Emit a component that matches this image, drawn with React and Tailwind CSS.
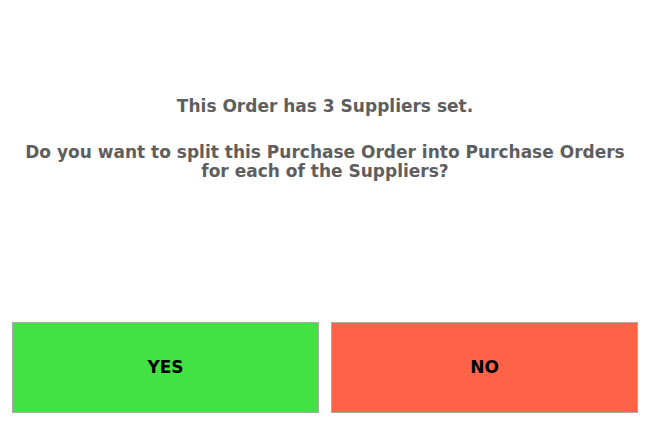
import React from 'react';

const App = () => {
  return (
    <div className="h-[425px] w-[650px] bg-white flex flex-col font-['DejaVu_Sans',sans-serif]">
      {/* Message */}
      <div className="flex-1 pt-[97px] text-center font-bold text-[#5e5e5e] text-[17px] leading-[19px]">
        <p>This Order has 3 Suppliers set.</p>
        <p className="mt-[27px]">
          Do you want to split this Purchase Order into Purchase Orders
          <br />
          for each of the Suppliers?
        </p>
      </div>

      {/* Actions */}
      <div className="flex gap-3 px-3 pb-3">
        <button className="flex-1 h-[91px] bg-[#42e243] border border-[#a9a9a9] font-bold text-[17px] text-black">
          YES
        </button>
        <button className="flex-1 h-[91px] bg-[#ff6347] border border-[#a9a9a9] font-bold text-[17px] text-black">
          NO
        </button>
      </div>
    </div>
  );
};

export default App;
